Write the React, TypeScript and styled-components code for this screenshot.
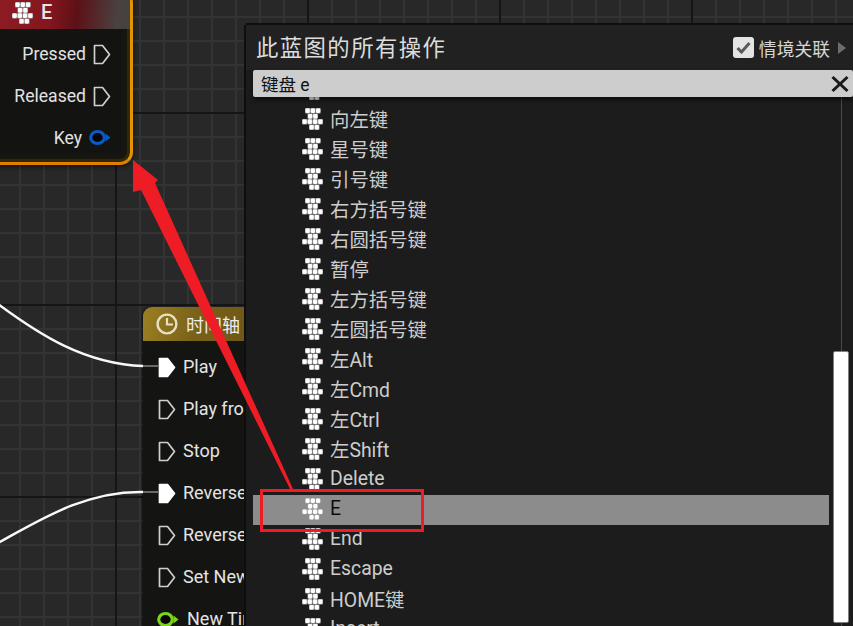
import React from "react";
import styled, { createGlobalStyle } from "styled-components";

const Global = createGlobalStyle`
  html, body { margin: 0; padding: 0; background: #282828; }
  body { width: 853px; height: 626px; overflow: hidden; }
`;

const FONT = `Roboto, "Noto Sans CJK SC", "Noto Sans", sans-serif`;

const Canvas = styled.div`
  position: relative;
  width: 853px;
  height: 626px;
  overflow: hidden;
  font-family: ${FONT};
  background-color: #282828;
  background-image:
    linear-gradient(to right, #151515 0, #151515 2px, transparent 2px),
    linear-gradient(to bottom, #151515 0, #151515 2px, transparent 2px),
    linear-gradient(to right, #333333 0, #333333 2px, transparent 2px),
    linear-gradient(to bottom, #333333 0, #333333 2px, transparent 2px);
  background-size: 192px 192px, 192px 192px, 24px 24px, 24px 24px;
  background-position: 115px 0, 0 112px, 19px 0, 0 16px;
`;

const Wires = styled.svg`
  position: absolute;
  left: 0;
  top: 0;
  width: 853px;
  height: 626px;
  z-index: 1;
`;

const Overlay = styled.svg`
  position: absolute;
  left: 0;
  top: 0;
  width: 853px;
  height: 626px;
  z-index: 5;
  pointer-events: none;
`;

const KeyNode = styled.div`
  position: absolute;
  left: -12px;
  top: -10px;
  width: 145px;
  box-sizing: border-box;
  display: flex;
  flex-direction: column;
  border: 3px solid #df7f00;
  border-top-color: #e6a000;
  border-right-color: #e39400;
  border-radius: 13px;
  background: #131412;
  box-shadow: inset 0 0 0 3px #33270a, inset 0 0 6px 4px #1f1a0a, 0 2px 5px rgba(0, 0, 0, 0.5);
  padding-bottom: 4px;
  overflow: hidden;
`;

const KeyHeader = styled.div`
  height: 36px;
  box-sizing: border-box;
  padding: 0 0 5px 21px;
  display: flex;
  align-items: flex-end;
  gap: 8px;
  color: #e6e6e6;
  font-size: 20px;
  font-weight: 500;
  line-height: 24px;
  background: linear-gradient(96deg, #8e1d24 0%, #85161d 42%, #5c1117 62%, #4a4140 90%, #44423f 100%);
  margin-bottom: 4px;
`;

const KeyRow = styled.div<{ $height?: number }>`
  height: ${(p) => p.$height ?? 42}px;
  display: flex;
  align-items: center;
  justify-content: flex-end;
  gap: 7px;
  padding-right: 19px;
  color: #e2e2e2;
  font-size: 17.6px;
`;

const TimelineNode = styled.div`
  position: absolute;
  left: 143px;
  top: 307px;
  width: 180px;
  height: 340px;
  display: flex;
  flex-direction: column;
  background: #141513;
  border-radius: 9px 0 0 0;
  box-shadow: -1px 0 2px rgba(0, 0, 0, 0.6);
`;

const TimelineHeader = styled.div`
  height: 34px;
  flex: none;
  display: flex;
  align-items: center;
  gap: 8px;
  padding-left: 13px;
  border-radius: 9px 0 0 0;
  color: #eeeeee;
  font-size: 18px;
  background: linear-gradient(100deg, #9a7f22 0%, #7a6119 30%, #6e5617 60%, #8c7120 100%);
  margin-bottom: 5px;
`;

const PinRow = styled.div<{ $gap?: number; $pad?: number }>`
  height: 42px;
  flex: none;
  display: flex;
  align-items: center;
  gap: ${(p) => p.$gap ?? 7}px;
  padding-left: ${(p) => p.$pad ?? 15}px;
  color: #e4e4e4;
  font-size: 18px;
  white-space: nowrap;
`;

const PinLabel = styled.span`
  margin-top: -2px;
`;

const Panel = styled.div`
  position: absolute;
  left: 246px;
  top: 25px;
  z-index: 2;
  width: 607px;
  height: 620px;
  display: flex;
  flex-direction: column;
  background: #1c1c1c;
  box-shadow: 0 -2px 0 #0e0e0e, -2px 0 0 #0e0e0e;
  padding-left: 7px;
  box-sizing: border-box;
`;

const PanelHead = styled.div`
  height: 45px;
  flex: none;
  display: flex;
  align-items: center;
  padding: 0 7px 0 10px;
  background: #212121;
  margin-left: -7px;
`;

const Title = styled.div`
  flex: 1;
  color: #dcdcdc;
  font-size: 22.4px;
  letter-spacing: 1.4px;
  line-height: 1;
  margin-top: 2px;
`;

const Check = styled.div`
  width: 21px;
  height: 21px;
  border-radius: 3px;
  background: #e4e4e4;
  display: flex;
  align-items: center;
  justify-content: center;
  margin-right: 5px;
`;

const ContextLabel = styled.div`
  color: #d6d6d6;
  font-size: 17.8px;
  margin-right: 8px;
`;

const Caret = styled.div`
  width: 0;
  height: 0;
  border-left: 8px solid #6c6c6c;
  border-top: 6px solid transparent;
  border-bottom: 6px solid transparent;
`;

const Search = styled.div`
  position: relative;
  z-index: 1;
  height: 27px;
  flex: none;
  display: flex;
  align-items: center;
  justify-content: space-between;
  padding: 0 3px 0 8px;
  background: #cdcdcd;
  border-radius: 2px;
  color: #111111;
  font-size: 17.5px;
  box-shadow: 0 3px 4px rgba(0, 0, 0, 0.5);
`;

const ListArea = styled.div`
  display: flex;
  flex: 1;
  margin-top: -22px;
`;

const Rows = styled.div`
  width: 576px;
  flex: none;
`;

const Row = styled.div<{ $selected?: boolean }>`
  height: 30px;
  box-sizing: border-box;
  padding: 0 0 2px 49px;
  display: flex;
  align-items: center;
  gap: 7px;
  font-size: 19.4px;
  color: ${(p) => (p.$selected ? "#0c0c0c" : "#cdcdcd")};
  background: ${(p) => (p.$selected ? "#8c8c8c" : "transparent")};
`;

const RowLabel = styled.span`
  margin-top: -1px;
`;

const Track = styled.div`
  width: 16px;
  flex: none;
  margin-left: 4px;
  background: linear-gradient(to right, transparent 8px, #4a4a4a 8px, #4a4a4a 9px, transparent 9px);
  background-repeat: no-repeat;
`;

const Thumb = styled.div`
  margin-top: 276px;
  height: 272px;
  box-sizing: border-box;
  background: #ffffff;
  border: 1px solid #808080;
  border-radius: 2px;
`;

const KeyIcon = () => {
  const blocks: [number, number][] = [
    [3, 0], [8.25, 0], [13.5, 0],
    [5.5, 5.5], [10.75, 5.5],
    [0, 11], [5.25, 11], [10.5, 11], [15.75, 11],
    [7, 16.5], [12.25, 16.5],
  ];
  return (
    <svg width="21" height="22" viewBox="0 0 21 22" style={{ flex: "none" }}>
      {blocks.map(([x, y]) => (
        <rect key={`b${x}-${y}`} x={x} y={y} width="5.25" height="5.5" rx="1" fill="#a4a4a4" />
      ))}
      {blocks.map(([x, y]) => (
        <rect key={`w${x}-${y}`} x={x + 0.5} y={y + 0.6} width="4.2" height="4.3" rx="1.3" fill="#ffffff" />
      ))}
    </svg>
  );
};

const ExecPin = ({ filled }: { filled?: boolean }) => (
  <svg width="18" height="21" viewBox="0 0 18 21" style={{ flex: "none" }}>
    <path
      d="M1.5 1.5 H9.5 L16.5 10.5 L9.5 19.5 H1.5 Z"
      fill={filled ? "#ffffff" : "none"}
      stroke={filled ? "#ffffff" : "#cfcfcf"}
      strokeWidth="1.7"
      strokeLinejoin="round"
    />
  </svg>
);

const DataPin = ({ color }: { color: string }) => (
  <svg width="22" height="17" viewBox="0 0 22 17" style={{ flex: "none" }}>
    <ellipse cx="8.5" cy="8.5" rx="6.8" ry="6" fill="#060606" stroke={color} strokeWidth="3.2" />
    <path d="M16.5 4.5 L21.5 8.5 L16.5 12.5 Z" fill={color} />
  </svg>
);

const Clock = () => (
  <svg width="22" height="22" viewBox="0 0 22 22" style={{ flex: "none" }}>
    <circle cx="11" cy="11" r="9.4" fill="none" stroke="#e8dfc4" strokeWidth="2.4" />
    <path d="M11 5 V11.5 H17" fill="none" stroke="#e8dfc4" strokeWidth="2.2" />
  </svg>
);

const items = [
  "", "向左键", "星号键", "引号键", "右方括号键", "右圆括号键", "暂停", "左方括号键", "左圆括号键",
  "左Alt", "左Cmd", "左Ctrl", "左Shift", "Delete", "E", "End", "Escape", "HOME键", "Insert",
];

export default function App() {
  return (
    <Canvas>
      <Global />
      <Wires viewBox="0 0 853 626">
        <path d="M-2 304 C 40 335, 85 364, 143 366" fill="none" stroke="#f8f8f8" strokeWidth="2.4" />
        <path d="M-2 543 C 40 520, 85 491, 143 492" fill="none" stroke="#f8f8f8" strokeWidth="2.4" />
        <path d="M143 366 H158 M143 492 H158" fill="none" stroke="#6a6a6a" strokeWidth="2" />
      </Wires>

      <KeyNode>
        <KeyHeader>
          <KeyIcon />
          <span>E</span>
        </KeyHeader>
        <KeyRow>Pressed<ExecPin /></KeyRow>
        <KeyRow>Released<ExecPin /></KeyRow>
        <KeyRow $height={41}>
          <span>Key</span>
          <DataPin color="#0a5ac4" />
        </KeyRow>
      </KeyNode>

      <TimelineNode>
        <TimelineHeader>
          <Clock />
          <span>时间轴</span>
        </TimelineHeader>
        <PinRow><ExecPin filled /><PinLabel>Play</PinLabel></PinRow>
        <PinRow><ExecPin /><PinLabel>Play from Start</PinLabel></PinRow>
        <PinRow><ExecPin /><PinLabel>Stop</PinLabel></PinRow>
        <PinRow><ExecPin filled /><PinLabel>Reverse</PinLabel></PinRow>
        <PinRow><ExecPin /><PinLabel>Reverse from End</PinLabel></PinRow>
        <PinRow><ExecPin /><PinLabel>Set New Time</PinLabel></PinRow>
        <PinRow $pad={14} $gap={8}><DataPin color="#7cd41a" /><PinLabel>New Time</PinLabel></PinRow>
      </TimelineNode>

      <Panel>
        <PanelHead>
          <Title>此蓝图的所有操作</Title>
          <Check>
            <svg width="15" height="13" viewBox="0 0 15 13">
              <path d="M1.5 7 L5.5 11 L13.5 2" fill="none" stroke="#5a5a5a" strokeWidth="3" />
            </svg>
          </Check>
          <ContextLabel>情境关联</ContextLabel>
          <Caret />
        </PanelHead>
        <Search>
          <span>键盘 e</span>
          <svg width="20" height="20" viewBox="0 0 20 20">
            <path d="M2.5 3 L17.5 17 M17.5 3 L2.5 17" stroke="#1a1a1a" strokeWidth="3" />
          </svg>
        </Search>
        <ListArea>
          <Rows>
            {items.map((t, i) => (
              <Row key={i} $selected={t === "E"}>
                <KeyIcon />
                <RowLabel>{t}</RowLabel>
              </Row>
            ))}
          </Rows>
          <Track>
            <Thumb />
          </Track>
        </ListArea>
      </Panel>

      <Overlay viewBox="0 0 853 626">
        <polygon points="133,160 158,180 155,183 293,489 290,489 141,190 133,192" fill="#ee1c25" />
        <rect x="261.5" y="490.5" width="161" height="40" fill="none" stroke="#ee1c25" strokeWidth="3" />
      </Overlay>
    </Canvas>
  );
}
